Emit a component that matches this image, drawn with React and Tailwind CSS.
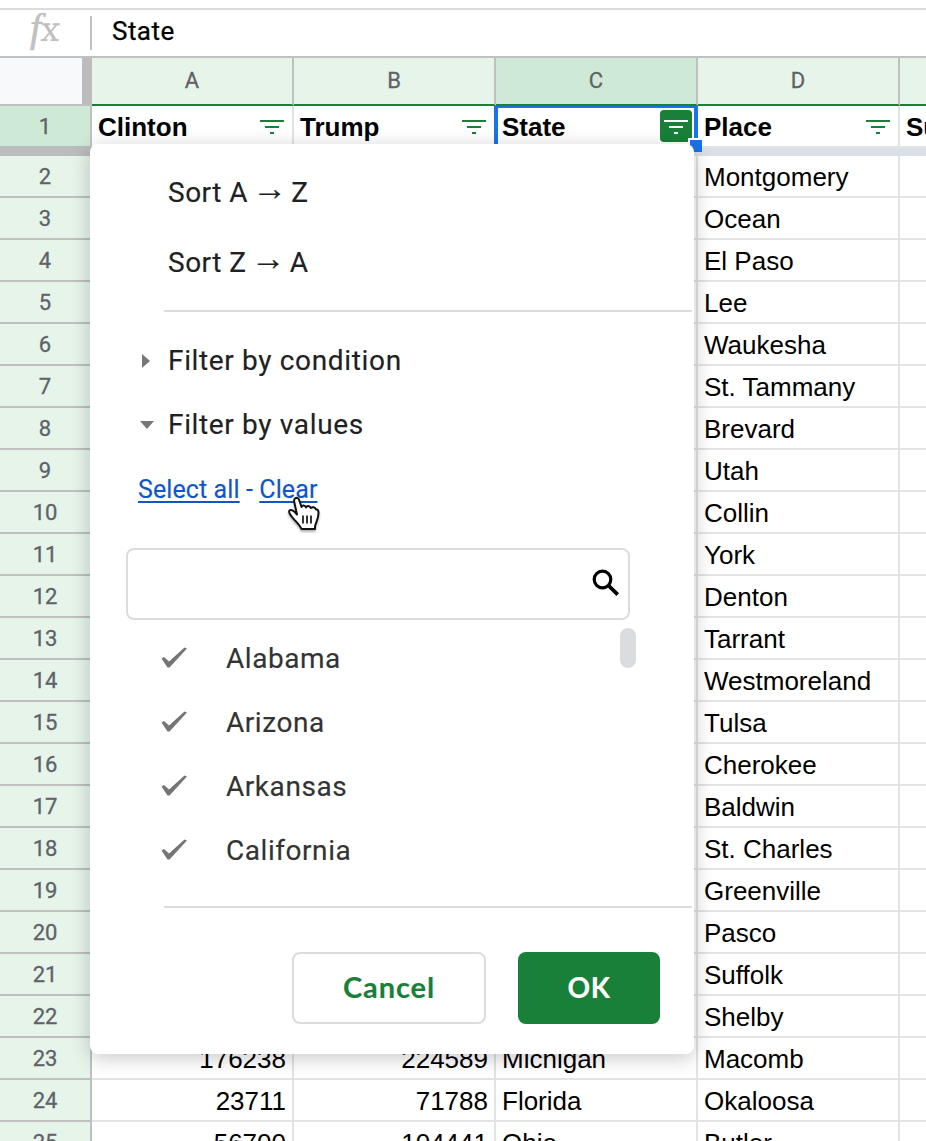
const PLACES = [
  'Montgomery', 'Ocean', 'El Paso', 'Lee', 'Waukesha', 'St. Tammany', 'Brevard', 'Utah',
  'Collin', 'York', 'Denton', 'Tarrant', 'Westmoreland', 'Tulsa', 'Cherokee', 'Baldwin',
  'St. Charles', 'Greenville', 'Pasco', 'Suffolk', 'Shelby', 'Macomb', 'Okaloosa', 'Butler',
];

const DETAILS = {
  23: ['176238', '224589', 'Michigan'],
  24: ['23711', '71788', 'Florida'],
  25: ['56700', '104441', 'Ohio'],
};

const STATES = ['Alabama', 'Arizona', 'Arkansas', 'California'];

const GRID = 'grid grid-cols-[92px_202px_202px_202px_202px_202px]';

function FilterIcon({ className }) {
  return (
    <svg width="24" height="14" viewBox="0 0 24 14" className={className} fill="currentColor">
      <path d="M0 0h24v2H0zM5 6h14v2H5zM10 12h4v2h-4z" />
    </svg>
  );
}

function ColumnHeader({ label, active }) {
  return (
    <div
      className={`flex h-[48px] justify-center border-r-2 border-b-2 border-r-[#c0c0c0] border-b-[#188038] font-[Roboto] text-[22px] leading-[46px] text-[#5f6368] [-webkit-text-stroke:0.3px] ${
        active ? 'bg-[#ceead6]' : 'bg-[#e6f4ea]'
      }`}
    >
      {label}
    </div>
  );
}

function TitleCell({ children }) {
  return (
    <div className="flex h-[42px] items-start justify-between border-r-2 border-b-2 border-[#e2e3e3] pr-2 pl-[6px] font-bold">
      <span className="pt-px leading-[40px]">{children}</span>
      <FilterIcon className="mt-[14px] shrink-0 text-[#188038]" />
    </div>
  );
}

function Cell({ children, numeric }) {
  return (
    <div
      className={`h-[42px] border-r-2 border-b-2 border-[#e2e3e3] pt-px pr-[6px] pl-[6px] leading-[40px] whitespace-nowrap ${
        numeric ? 'text-right' : ''
      }`}
    >
      {children}
    </div>
  );
}

function RowHeader({ n }) {
  return (
    <div className="h-[42px] border-r-2 border-b-2 border-[#c0c0c0] bg-[#e6f4ea] pt-px text-center font-[Roboto] text-[22px] leading-[40px] text-[#5f6368] [-webkit-text-stroke:0.3px]">
      {n}
    </div>
  );
}

function Arrow() {
  return (
    <span className="-mt-[9px] flex h-[34px] w-[27px] justify-center font-['Liberation_Serif',serif] text-[35px] leading-[34px] tracking-normal">
      →
    </span>
  );
}

function Check() {
  return (
    <svg width="28" height="24" viewBox="0 0 28 24" fill="none" className="-mt-[2px]">
      <path d="M1.500 12.500 4 11 9 15.500 24.500 1.500 27 2.500 9.500 21.500 7.500 21.500Z" fill="#757575" />
    </svg>
  );
}

function HandCursor() {
  return (
    <svg
      width="34"
      height="38"
      viewBox="0 0 34 38"
      className="absolute top-[496px] left-[287px] drop-shadow-[0_2px_1px_rgba(0,0,0,0.3)]"
    >
      <path
        d="M8 2.500C10 1 12 2.500 12.500 5L14.500 11C15 9 18 8.800 19 11.500C20 9.500 22.500 9.500 24 12C25.500 10.500 28 11 29 13.500C31 13 31.500 15 31.500 17C31.500 23 29 26 28 30.500V33H14.500C13 29 9 26 5 21C3 18.500 1 16.500 2.500 14.500C4.500 13 7.500 15.500 10 18.500L7.500 7C7 5 6.500 3.500 8 2.500Z"
        fill="#fff"
        stroke="#111"
        strokeWidth="2"
        strokeLinejoin="round"
      />
      <path d="M16 19.500v8M20 19.500v8M24 19.500v8" stroke="#222" strokeWidth="1.800" />
    </svg>
  );
}

function FilterMenu() {
  return (
    <div className="absolute top-[144px] left-[90px] flex h-[910px] w-[604px] flex-col rounded-lg bg-white pt-[14px] font-[Roboto] text-[28px] tracking-[0.650px] text-[#202124] shadow-[0_4px_20px_rgba(0,0,0,0.22)] [-webkit-text-stroke:0.15px]">
      <div className="flex h-[70px] items-center gap-[8px] pl-[78px] tracking-[0.500px]">
        Sort A <Arrow /> Z
      </div>
      <div className="flex h-[70px] items-center gap-[8px] pl-[78px] tracking-[0.500px]">
        Sort Z <Arrow /> A
      </div>
      <div className="mt-3 mr-[2px] ml-[74px] h-[2px] shrink-0 bg-[#dadce0]" />

      <div className="mt-[17px] flex h-16 shrink-0 items-center">
        <svg width="14" height="14" className="mr-[14px] ml-[50px]" fill="#777">
          <path d="M2 0v14l8-7z" />
        </svg>
        Filter by condition
      </div>
      <div className="flex h-16 shrink-0 items-center">
        <svg width="14" height="8" className="mr-[14px] ml-[50px]" fill="#777">
          <path d="M0 0h14l-7 8z" />
        </svg>
        Filter by values
      </div>

      <div className="mt-[13px] ml-12 h-10 shrink-0 text-[25px] leading-[40px] tracking-[0.100px] text-[#1155cc]">
        <span className="underline decoration-2 underline-offset-[3px]">Select all</span> -{' '}
        <span className="underline decoration-2 underline-offset-[3px]">Clear</span>
      </div>

      <div className="mt-[38px] ml-9 flex h-[72px] w-[504px] shrink-0 items-center justify-end rounded-lg border-2 border-[#dadce0] pr-[8px] pb-[2px]">
        <svg width="28" height="28" viewBox="0 0 28 28" fill="none" stroke="#000">
          <circle cx="10.500" cy="10.500" r="8.300" strokeWidth="3.200" />
          <path d="m17 17 8.700 8.700" strokeWidth="3.800" />
        </svg>
      </div>

      <div className="mt-[6px] ml-[70px] flex h-[256px] w-[476px] shrink-0 justify-between tracking-[0.550px] text-[#333]">
        <div className="pt-px">
          {STATES.map((state) => (
            <div key={state} className="flex h-16 items-center gap-[38px]">
              <Check />
              {state}
            </div>
          ))}
        </div>
        <div className="mt-[2px] h-10 w-4 rounded-full bg-[#dadce0]" />
      </div>

      <div className="mt-6 mr-[2px] ml-[74px] h-[2px] shrink-0 bg-[#dadce0]" />
      <div className="mt-11 flex h-[72px] shrink-0 justify-end gap-8 pr-[34px] font-[Lato] font-bold">
        <button className="w-[194px] rounded-lg border-2 border-[#dadce0] pb-[2px] text-[29px] tracking-[0.900px] text-[#188038]">
          Cancel
        </button>
        <button className="w-[142px] rounded-lg bg-[#188038] pb-[2px] text-white">OK</button>
      </div>
    </div>
  );
}

export default function App() {
  return (
    <div className="relative h-[1141px] w-[926px] overflow-hidden bg-white font-['Liberation_Sans',Arial,sans-serif] text-[26px] text-black">
      <div className="mt-2 flex h-[50px] items-start border-t-2 border-b-2 border-t-[#dadce0] border-b-[#c0c0c0]">
        <div className="flex w-[90px] items-baseline pl-[30px] text-[40px] leading-[36px] text-[#c0c0c0] [-webkit-text-stroke:0.6px]">
          <span className="font-['Liberation_Serif',serif] italic">f</span>
          <span className="inline-block -skew-x-6 font-['DejaVu_Serif',serif] text-[34px] [-webkit-text-stroke:0px]">x</span>
        </div>
        <div className="mt-[6px] h-[34px] w-[2px] bg-[#c0c0c0]" />
        <div className="pl-5 font-[Roboto] leading-[42px] tracking-[0.450px] [-webkit-text-stroke:0.25px]">State</div>
      </div>

      <div className={GRID}>
        <div className="flex h-[48px] border-b-2 border-[#c0c0c0]">
          <div className="w-[82px] bg-[#f8f9fa]" />
          <div className="w-[10px] bg-[#bcbcbc]" />
        </div>
        <ColumnHeader label="A" />
        <ColumnHeader label="B" />
        <ColumnHeader label="C" active />
        <ColumnHeader label="D" />
        <ColumnHeader label="" />
      </div>

      <div className={`${GRID} h-[50px] bg-[#dadfe8]`}>
        <div className="h-[50px] border-b-[10px] border-[#bcbcbc]">
          <div className="h-[40px] border-r-2 border-[#c0c0c0] bg-[#ceead6] pt-px text-center font-[Roboto] text-[22px] leading-[40px] text-[#5f6368] [-webkit-text-stroke:0.3px]">
            1
          </div>
        </div>
        <div className="h-[42px] bg-white"><TitleCell>Clinton</TitleCell></div>
        <div className="h-[42px] bg-white"><TitleCell>Trump</TitleCell></div>
        <div className="relative -ml-[2px] flex h-[42px] items-start justify-between border-x-4 border-t-2 border-[#1a73e8] bg-white pr-[2px] pl-1 font-bold">
          <span className="-mt-px leading-[40px]">State</span>
          <span className="mt-[2px] flex h-8 w-8 items-center justify-center rounded bg-[#188038] pt-[2px] text-white">
            <FilterIcon />
          </span>
          <span className="absolute top-[30px] -right-[8px] h-[14px] w-[14px] border-t-2 border-l-2 border-white bg-[#1a73e8]" />
        </div>
        <div className="h-[42px] bg-white"><TitleCell>Place</TitleCell></div>
        <div className="h-[42px] bg-white"><TitleCell>Su</TitleCell></div>
      </div>

      {PLACES.map((place, i) => {
        const n = i + 2;
        const [a, b, c] = DETAILS[n] || ['', '', ''];
        return (
          <div key={n} className={GRID}>
            <RowHeader n={n} />
            <Cell numeric>{a}</Cell>
            <Cell numeric>{b}</Cell>
            <Cell>{c}</Cell>
            <Cell>{place}</Cell>
            <Cell />
          </div>
        );
      })}

      <FilterMenu />
      <HandCursor />
    </div>
  );
}
